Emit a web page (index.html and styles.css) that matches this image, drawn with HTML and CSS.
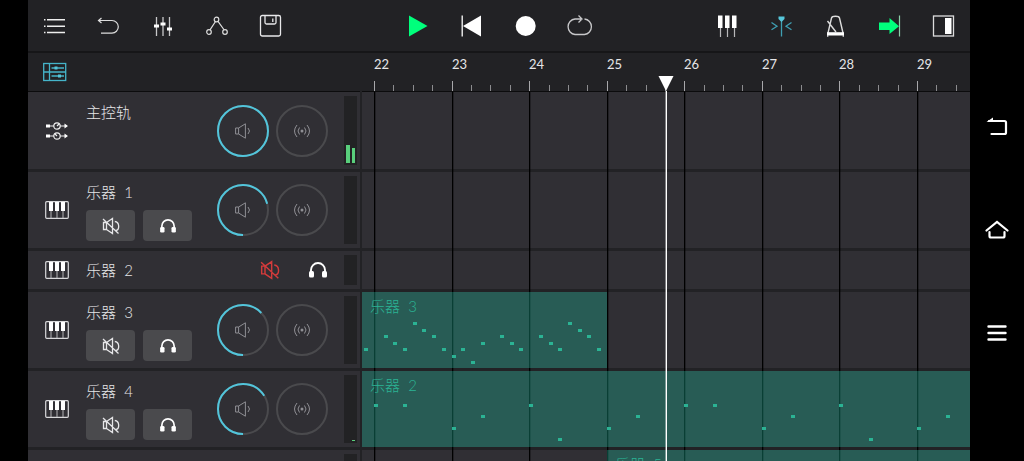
FILE: index.html
```html
<!DOCTYPE html>
<html lang="zh-CN">
<head>
<meta charset="utf-8">
<meta name="viewport" content="width=device-width, initial-scale=1">
<title>音轨编辑</title>
<link rel="stylesheet" href="styles.css">
</head>
<body>
<svg class="symbols" aria-hidden="true">
  <symbol id="keys" viewBox="0 0 24 18">
    <rect x="0.7" y="0.7" width="22.6" height="16.6" rx="1" fill="none" stroke="#d8d8da" stroke-width="1.2"/>
    <path d="M6 9v8M12 9v8M18 9v8" stroke="#b4b4b6" stroke-width="1"/>
    <path d="M4 1h4v9H4zM10 1h4v9h-4zM16 1h4v9h-4z" fill="#fff"/>
  </symbol>
  <symbol id="routing" viewBox="0 0 22 20">
    <g fill="none" stroke="#eee" stroke-width="1.2">
      <circle cx="11" cy="5" r="3.2"/><circle cx="11" cy="15" r="3.2"/>
      <path d="M3 5h5M14 5h5M3 15h5M14 15h5M11 5l2-2M11 15l-2-2"/>
    </g>
    <path d="M0 3.500h4v3H0zM0 13.500h4v3H0zM18.500 2.500L22 5l-3.500 2.500zM18.500 12.500L22 15l-3.500 2.500z" fill="#fff"/>
  </symbol>
  <symbol id="speaker" viewBox="0 0 16 16">
    <path d="M.6 5h3v6h-3zM3.600 5L10.400 .8v14.400L3.600 11M13 5q3 3 0 6" fill="none" stroke="currentColor" stroke-width="1"/>
  </symbol>
  <symbol id="pan" viewBox="0 0 16 16">
    <circle cx="8" cy="8" r="1.500" fill="currentColor"/>
    <path d="M5.500 4.500q-3 3.500 0 7M10.500 4.500q3 3.500 0 7M3 2q-5 6 0 12M13 2q5 6 0 12" fill="none" stroke="currentColor" stroke-width="1"/>
  </symbol>
  <symbol id="mute" viewBox="0 0 18 18">
    <path d="M1.500 5.500h3v7h-3zM4.500 5.500l6-4v15l-6-4M12.800 4.500c5 .5 5 8.500 1 9M1 2l15.500 14.500" fill="none" stroke="currentColor" stroke-width="1.300"/>
  </symbol>
  <symbol id="phones" viewBox="0 0 18 16">
    <path d="M2 12V8a7 7 0 0 1 14 0v4" fill="none" stroke="#fff" stroke-width="1.900"/>
    <rect x="0" y="9" width="5" height="6.500" rx="1.500" fill="#fff"/><rect x="13" y="9" width="5" height="6.500" rx="1.500" fill="#fff"/>
  </symbol>
</svg>

<div class="screen">
  <main class="app">
    <header class="toolbar">
      <div class="group">
        <button class="tool" aria-label="菜单"><svg width="24" height="24" viewBox="0 0 24 24"><path d="M4 5.800h18M4 12.200h18M4 18.500h18M1 5.800h1.500M1 12.200h1.500M1 18.500h1.500" stroke="#eee" stroke-width="1.500"/></svg></button>
        <button class="tool" aria-label="撤销"><svg width="24" height="24" viewBox="0 0 24 24" fill="none" stroke="#ddd" stroke-width="1.200"><path d="M1.500 6.500H15a6.300 6.300 0 0 1 0 12.600H4M4.500 4L1.500 6.500l3 2.500"/></svg></button>
        <button class="tool" aria-label="混音器"><svg width="24" height="24" viewBox="0 0 24 24"><path d="M5.500 3v19M12 3v19M18.500 3v19" stroke="#c8c8ca" stroke-width="1.300"/><path d="M3 10.500h5v3H3zM9.500 8.500h5v3h-5zM16 13.500h5v3h-5z" fill="#fff"/></svg></button>
        <button class="tool" aria-label="自动化"><svg width="24" height="24" viewBox="0 0 24 24" fill="none" stroke="#ddd" stroke-width="1.200"><path d="M10.500 7.500L5 15.800M13 7.300l6.200 8.700"/><circle cx="11.500" cy="5.500" r="2.300"/><circle cx="4" cy="18" r="2.300"/><circle cx="20" cy="18" r="2.300"/></svg></button>
        <button class="tool" aria-label="保存"><svg width="24" height="24" viewBox="0 0 24 24" fill="none" stroke="#e8e8ea" stroke-width="1.300"><rect x="1.500" y="1.500" width="20" height="20.500" rx="1.800"/><path d="M6 2v6.500q0 1.500 1.500 1.500h8q1.500 0 1.500-1.500V2M13.800 4.500v3.500"/></svg></button>
      </div>
      <div class="group">
        <button class="tool" aria-label="播放"><svg width="24" height="24" viewBox="0 0 24 24"><path d="M3 1.500v21L21.500 12z" fill="#00ff7c"/></svg></button>
        <button class="tool" aria-label="回到开头"><svg width="24" height="24" viewBox="0 0 24 24"><path d="M21 1.500v21L3 12z" fill="#fff"/><path d="M2.200 1.500v21" stroke="#fff" stroke-width="1.300"/></svg></button>
        <button class="tool" aria-label="录音"><svg width="24" height="24" viewBox="0 0 24 24"><circle cx="11.700" cy="12" r="10" fill="#fff"/></svg></button>
        <button class="tool" aria-label="循环"><svg width="28" height="24" viewBox="0 0 28 24" fill="none" stroke="#c8c8ca" stroke-width="1.300"><path d="M18.500 5a7.800 7.800 0 0 1 0 15.500H9a7.800 7.800 0 0 1 0-15.500H15M12.500 1.500L16 5l-3.500 3.500"/></svg></button>
      </div>
      <div class="group">
        <button class="tool" aria-label="键盘"><svg width="24" height="24" viewBox="0 0 24 24"><path d="M3 1.500h4.500V14H3zM10 1.500h4.500V14H10zM17 1.500h4.500V14H17z" fill="#fff"/><path d="M5.500 14v9M12.500 14v9M19.500 14v9" stroke="#b8b8ba" stroke-width="1.200"/></svg></button>
        <button class="tool" aria-label="吸附"><svg width="24" height="24" viewBox="0 0 24 24"><path d="M12.500 5v17.500M2.500 8.500l5.500 3.700-5.500 3.600M22.500 8.500L17 12.200l5.500 3.600" fill="none" stroke="#3f9fb2" stroke-width="1.300"/><path d="M9.500 2.500h6v2.500l-3 3-3-3z" fill="#56c6da"/></svg></button>
        <button class="tool" aria-label="节拍器"><svg width="24" height="24" viewBox="0 0 24 24" fill="none" stroke="#ddd" stroke-width="1.400"><path d="M5 19L8.500 4q.4-1.700 4-1.700t4 1.700L20 19M4.500 7l8.500 11"/><path d="M4 18.200h17v3.300H4z" fill="#fff" stroke="none"/><path d="M4.700 21v1.700M20.300 21v1.700"/></svg></button>
        <button class="tool" aria-label="自动滚动"><svg width="24" height="24" viewBox="0 0 24 24"><path d="M2 8.500h10.500V4l9.500 8.200-9.500 7.800v-4H2z" fill="#00ff7c"/><path d="M22.500 1.500v21" stroke="#8ccfaa" stroke-width="1.200"/></svg></button>
        <button class="tool" aria-label="侧栏"><svg width="24" height="24" viewBox="0 0 24 24"><rect x="2.500" y="2" width="20" height="20" fill="none" stroke="#ddd" stroke-width="1.300"/><path d="M14 4h6.500v16H14z" fill="#fff"/></svg></button>
      </div>
    </header>

    <div class="workspace">
      <section class="tracks">
        <div class="corner">
          <button class="tool" aria-label="轨道视图"><svg width="24" height="20" viewBox="0 0 24 20" fill="none" stroke="#45b4c9" stroke-width="1.300"><rect x="0.700" y="1.500" width="22" height="17"/><path d="M6.500 1.500v17M1 10h22M8.500 6h12.500M8.500 14h12.500"/><path d="M11.500 4.500h3v3h-3zM15 12.500h3v3h-3z" fill="#56c6da" stroke="none"/></svg></button>
        </div>

        <article class="row master">
          <svg class="kind" width="22" height="20"><use href="#routing"/></svg>
          <div class="info"><h2 class="name">主控轨</h2></div>
          <div class="knobs">
            <label class="knob"><svg viewBox="0 0 52 52"><circle class="ring" cx="26" cy="26" r="25"/><circle class="value" cx="26" cy="26" r="25" pathLength="360" stroke-dasharray="360 0"/><use href="#speaker" x="18" y="18" width="16" height="16"/></svg><input type="range" aria-label="主控轨音量" max="360" value="360"></label>
            <label class="knob"><svg viewBox="0 0 52 52"><circle class="ring" cx="26" cy="26" r="25"/><use href="#pan" x="18" y="18" width="16" height="16"/></svg><input type="range" aria-label="主控轨声像"></label>
          </div>
          <div class="meter"><i class="level" style="height:18px"></i><i class="level" style="height:15px"></i></div>
        </article>

        <article class="row">
          <svg class="kind" width="24" height="18"><use href="#keys"/></svg>
          <div class="info"><h2 class="name">乐器  1</h2>
            <div class="switches"><button class="switch" aria-label="静音"><svg width="18" height="18"><use href="#mute"/></svg></button><button class="switch" aria-label="独奏"><svg width="16" height="14"><use href="#phones"/></svg></button></div></div>
          <div class="knobs">
            <label class="knob"><svg viewBox="0 0 52 52"><circle class="ring" cx="26" cy="26" r="25"/><circle class="value" cx="26" cy="26" r="25" pathLength="360" stroke-dasharray="255 360"/><use href="#speaker" x="18" y="18" width="16" height="16"/></svg><input type="range" aria-label="乐器 1 音量" max="360" value="255"></label>
            <label class="knob"><svg viewBox="0 0 52 52"><circle class="ring" cx="26" cy="26" r="25"/><use href="#pan" x="18" y="18" width="16" height="16"/></svg><input type="range" aria-label="乐器 1 声像"></label>
          </div>
          <div class="meter"></div>
        </article>

        <article class="row compact">
          <svg class="kind" width="24" height="18"><use href="#keys"/></svg>
          <div class="info"><h2 class="name">乐器  2</h2></div>
          <div class="quick"><button class="plain muted" aria-label="静音"><svg width="20" height="20"><use href="#mute"/></svg></button><button class="plain" aria-label="独奏"><svg width="18" height="16"><use href="#phones"/></svg></button></div>
          <div class="meter"></div>
        </article>

        <article class="row">
          <svg class="kind" width="24" height="18"><use href="#keys"/></svg>
          <div class="info"><h2 class="name">乐器  3</h2>
            <div class="switches"><button class="switch" aria-label="静音"><svg width="18" height="18"><use href="#mute"/></svg></button><button class="switch" aria-label="独奏"><svg width="16" height="14"><use href="#phones"/></svg></button></div></div>
          <div class="knobs">
            <label class="knob"><svg viewBox="0 0 52 52"><circle class="ring" cx="26" cy="26" r="25"/><circle class="value" cx="26" cy="26" r="25" pathLength="360" stroke-dasharray="227 360"/><use href="#speaker" x="18" y="18" width="16" height="16"/></svg><input type="range" aria-label="乐器 3 音量" max="360" value="227"></label>
            <label class="knob"><svg viewBox="0 0 52 52"><circle class="ring" cx="26" cy="26" r="25"/><use href="#pan" x="18" y="18" width="16" height="16"/></svg><input type="range" aria-label="乐器 3 声像"></label>
          </div>
          <div class="meter"></div>
        </article>

        <article class="row">
          <svg class="kind" width="24" height="18"><use href="#keys"/></svg>
          <div class="info"><h2 class="name">乐器  4</h2>
            <div class="switches"><button class="switch" aria-label="静音"><svg width="18" height="18"><use href="#mute"/></svg></button><button class="switch" aria-label="独奏"><svg width="16" height="14"><use href="#phones"/></svg></button></div></div>
          <div class="knobs">
            <label class="knob"><svg viewBox="0 0 52 52"><circle class="ring" cx="26" cy="26" r="25"/><circle class="value" cx="26" cy="26" r="25" pathLength="360" stroke-dasharray="238 360"/><use href="#speaker" x="18" y="18" width="16" height="16"/></svg><input type="range" aria-label="乐器 4 音量" max="360" value="238"></label>
            <label class="knob"><svg viewBox="0 0 52 52"><circle class="ring" cx="26" cy="26" r="25"/><use href="#pan" x="18" y="18" width="16" height="16"/></svg><input type="range" aria-label="乐器 4 声像"></label>
          </div>
          <div class="meter"><i class="level" style="height:0"></i><i class="level" style="height:1px"></i></div>
        </article>

        <article class="row"><div class="meter"></div></article>
      </section>

      <section class="timeline">
        <div class="ruler" id="ruler"></div>
        <div class="lanes" id="lanes">
          <div class="lane master"></div>
          <div class="lane"></div>
          <div class="lane compact"></div>
          <div class="lane" data-clip="3"></div>
          <div class="lane" data-clip="2"></div>
          <div class="lane" data-clip="5"></div>
          <div class="bars" id="bars"></div>
        </div>
        <div class="playhead"><svg width="16" height="16" viewBox="0 0 16 16"><path d="M0.500 0h15L8 15z" fill="#fff"/></svg></div>
      </section>
    </div>
  </main>

  <nav class="system">
    <button class="plain" aria-label="返回"><svg width="24" height="24" viewBox="0 0 24 24" fill="none" stroke="#fff" stroke-width="2.200"><path d="M4 5h15.500q1.500 0 1.500 1.500v10q0 1.500-1.500 1.500H6.500" stroke-linecap="round"/><path d="M1.500 6L8 1.500V6z" fill="#fff" stroke="none"/></svg></button>
    <button class="plain" aria-label="主页"><svg width="24" height="24" viewBox="0 0 24 24" fill="none" stroke="#fff" stroke-width="2.200" stroke-linecap="round"><path d="M1.500 11.500L12 3l10.500 8.500M4.500 13v4q0 1.500 1.500 1.500h12q1.500 0 1.500-1.500v-4"/></svg></button>
    <button class="plain" aria-label="最近任务"><svg width="24" height="24" viewBox="0 0 24 24" stroke="#fff" stroke-width="2.400" stroke-linecap="round"><path d="M3.500 4.500h17M3.500 11h17M3.500 17.500h17"/></svg></button>
  </nav>
</div>
<script src="app.js"></script>
</body>
</html>
```

FILE: styles.css
```css
* { box-sizing: border-box; }

body {
  margin: 0;
  background: #000;
  color: #e6e6e8;
  font-family: Lato, "Noto Sans CJK SC", sans-serif;
  font-weight: 300;
}

button {
  margin: 0;
  padding: 0;
  border: 0;
  background: none;
  color: inherit;
  display: flex;
  align-items: center;
  justify-content: center;
}

svg { display: block; flex: none; }
.symbols { position: absolute; width: 0; height: 0; }

.screen {
  display: flex;
  height: 100vh;
  padding-left: 28px;
  overflow: hidden;
}

.app {
  flex: 1;
  min-width: 0;
  display: flex;
  flex-direction: column;
  background: #222225;
}

.toolbar {
  flex: none;
  display: flex;
  justify-content: space-between;
  border-bottom: 2px solid #161618;
}
.group { display: flex; }
.tool { width: 54px; height: 51px; }

.workspace {
  flex: 1;
  min-height: 0;
  display: grid;
  grid-template-columns: 332px minmax(0, 1fr);
  overflow: hidden;
}

/* Track headers */
.tracks, .lanes {
  display: flex;
  flex-direction: column;
  gap: 3px;
}
.corner, .ruler {
  flex: none;
  height: 39px;
  border-bottom: 1px solid #0c0c0d;
}
.corner { margin-bottom: -3px; }
.corner .tool { height: 37px; }

.row, .lane { flex: none; height: 76px; background: #302f34; }
.row.master, .lane.master { height: 77px; }
.row.compact, .lane.compact { height: 38px; }

.row {
  display: grid;
  grid-template-columns: 58px 1fr auto 13px;
  align-items: center;
  padding-right: 3px;
}
.kind { justify-self: center; }
.info { align-self: start; padding-top: 10px; }
.compact .info { align-self: center; padding: 0; }
.name {
  margin: 0;
  font-size: 15px;
  font-weight: 300;
  line-height: 20px;
  white-space: pre;
}
.switches { display: flex; gap: 8px; margin-top: 8px; }
.switch {
  width: 49px;
  height: 31px;
  border-radius: 4px;
  background: #4a4a4d;
}

.knobs { display: flex; gap: 7px; margin-right: 16px; }
.knob { position: relative; width: 52px; height: 52px; color: #8f8f94; }
.knob input {
  position: absolute;
  inset: 0;
  width: 100%;
  height: 100%;
  margin: 0;
  opacity: 0;
}
.ring, .value { fill: none; stroke-width: 2; }
.ring { stroke: #4a4a4d; }
.value { stroke: #52c5db; transform: rotate(90deg); transform-origin: 26px 26px; }

.quick { display: flex; gap: 16px; margin-right: 10px; }
.quick .plain { width: 32px; height: 32px; }
.muted { color: #d43b3b; }

.meter {
  grid-column: 4;
  align-self: stretch;
  display: flex;
  align-items: flex-end;
  gap: 2px;
  margin: 4px 0;
  padding: 2px;
  background: #222224;
}
.level { flex: 1; background: #59cf7c; }

/* Timeline */
.timeline {
  position: relative;
  padding-left: 2px;
  overflow: hidden;
}
.ruler { position: relative; }
.bar-number {
  position: absolute;
  top: 3px;
  font-size: 13px;
  line-height: 16px;
  font-weight: 400;
}
.tick { position: absolute; bottom: 0; width: 1px; height: 6px; background: #8c8c8f; }
.tick.major { height: 10px; background: #a8a8ab; }

.lanes { position: relative; }
.lane { position: relative; }
.bars { position: absolute; inset: 0; z-index: 1; }
.bar-line { position: absolute; top: 0; bottom: 0; width: 1px; background: #000; box-shadow: 1px 0 rgba(0, 0, 0, .3); }

.clip {
  position: absolute;
  top: 0;
  bottom: 0;
  z-index: 2;
  padding: 4px 8px;
  background: rgba(27, 170, 143, .37);
  color: #2bb394;
  font-size: 15px;
  line-height: 20px;
  white-space: pre;
  overflow: hidden;
}
.note { position: absolute; width: 4px; height: 3px; background: #2bb394; }

.playhead {
  position: absolute;
  top: 23px;
  bottom: 0;
  z-index: 3;
  width: 16px;
}
.playhead::after {
  content: "";
  position: absolute;
  top: 15px;
  bottom: 0;
  left: 8px;
  width: 1px;
  background: #fff;
  box-shadow: -1px 0 rgba(255, 255, 255, .4);
}

/* System navigation */
.system {
  flex: none;
  width: 54px;
  display: flex;
  flex-direction: column;
  align-items: center;
  justify-content: center;
  gap: 79px;
  background: #000;
}
```

FILE: app.js
```js
const FIRST_BAR = 22;
const ORIGIN = 12;
const BAR_WIDTH = 543 / 7;

const ruler = document.getElementById('ruler');
const bars = document.getElementById('bars');
const width = document.getElementById('lanes').clientWidth;
const barCount = Math.ceil((width - ORIGIN - 16) / BAR_WIDTH);

// Horizontal position of a time, in bars after FIRST_BAR.
const x = (time) => Math.round(ORIGIN + time * BAR_WIDTH);

function add(parent, className, left, text) {
  const el = document.createElement('div');
  el.className = className;
  el.style.left = left + 'px';
  if (text) el.textContent = text;
  parent.append(el);
  return el;
}

for (let bar = 0; bar < barCount; bar++) {
  add(ruler, 'bar-number', x(bar), String(FIRST_BAR + bar));
  add(bars, 'bar-line', x(bar));
  for (let beat = 0; beat < 4; beat++) {
    add(ruler, beat ? 'tick' : 'tick major', x(bar + beat / 4));
  }
}

// Notes are [eighth of a bar, top within the clip].
// A null start or end runs to the edge of the visible timeline.
const clips = {
  3: { from: null, to: 3, notes: [
    [-1, 56], [1, 43], [2, 50], [3, 56], [4, 30], [5, 37], [6, 43], [7, 56],
    [8, 63], [9, 56], [10, 69], [11, 50], [13, 43], [14, 50], [15, 56],
    [17, 43], [18, 50], [19, 56], [20, 30], [21, 37], [22, 43], [23, 56]] },
  2: { from: null, to: null, notes: [
    [0, 33], [3, 33], [8, 56], [11, 44], [16, 33], [19, 67], [24, 56], [27, 44],
    [32, 33], [35, 33], [40, 56], [43, 44], [48, 33], [51, 67], [56, 56], [59, 44]] },
  5: { from: 3, to: null, notes: [] },
};

for (const lane of document.querySelectorAll('[data-clip]')) {
  const { from, to, notes } = clips[lane.dataset.clip];
  const left = from === null ? 0 : x(from);
  const right = to === null ? width : x(to);
  const clip = add(lane, 'clip', left, '乐器  ' + lane.dataset.clip);
  clip.style.width = right - left + 'px';
  for (const [eighth, top] of notes) {
    add(clip, 'note', x(eighth / 8) - left).style.top = top + 'px';
  }
}

document.querySelector('.playhead').style.left = x(3.76) - 6 + 'px';
```
